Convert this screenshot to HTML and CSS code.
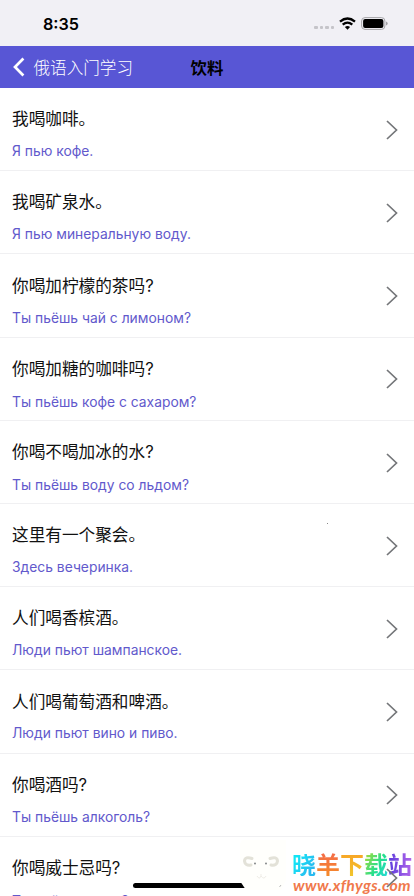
FILE: index.html
```html
<!DOCTYPE html>
<html lang="zh-CN">
<head>
<meta charset="utf-8">
<title>饮料</title>
<link rel="stylesheet" href="styles.css">
</head>
<body>
<div class="phone">
  <header class="status">
    <span class="time">8:35</span>
    <div class="indicators">
      <span class="cell"><i></i><i></i><i></i><i></i></span>
      <svg class="wifi" width="17" height="13" viewBox="0 0 17 13"><g fill="none" stroke="#000" stroke-width="2.3"><path d="M1 4.6Q8.5-1.7 16 4.6"/><path d="M3.7 7.7Q8.5 3.6 13.3 7.7"/></g><path d="M5.9 10.1Q8.5 7.9 11.1 10.1L8.5 12.7Z"/></svg>
      <svg class="battery" width="27" height="13" viewBox="0 0 27 13"><rect x=".6" y=".6" width="23.3" height="11.8" rx="3.4" fill="#f1f0f5" stroke="#a5a4a8"/><rect x="2.1" y="2.1" width="20.3" height="8.8" rx="2"/><path d="M25.1 4.6Q26.6 5 26.6 6.5T25.1 8.4Z" fill="#98979b"/></svg>
    </div>
  </header>
  <nav class="nav">
    <svg class="back" width="12" height="20" viewBox="0 0 12 20"><path d="M10.4 1.5L2 10l8.4 8.5" fill="none" stroke="#fff" stroke-width="2.7"/></svg>
    <span class="parent">俄语入门学习</span>
    <h1>饮料</h1>
  </nav>
  <ul class="list">
    <li><div><p class="zh">我喝咖啡。</p><p class="ru">Я пью кофе.</p></div><svg class="chev" viewBox="0 0 12 20"><path d="M1 1l9.5 9L1 19"/></svg></li>
    <li><div><p class="zh">我喝矿泉水。</p><p class="ru">Я пью минеральную воду.</p></div><svg class="chev" viewBox="0 0 12 20"><path d="M1 1l9.5 9L1 19"/></svg></li>
    <li><div><p class="zh">你喝加柠檬的茶吗<span>?</span></p><p class="ru">Ты пьёшь чай с лимоном?</p></div><svg class="chev" viewBox="0 0 12 20"><path d="M1 1l9.5 9L1 19"/></svg></li>
    <li><div><p class="zh">你喝加糖的咖啡吗<span>?</span></p><p class="ru">Ты пьёшь кофе с сахаром?</p></div><svg class="chev" viewBox="0 0 12 20"><path d="M1 1l9.5 9L1 19"/></svg></li>
    <li><div><p class="zh">你喝不喝加冰的水<span>?</span></p><p class="ru">Ты пьёшь воду со льдом?</p></div><svg class="chev" viewBox="0 0 12 20"><path d="M1 1l9.5 9L1 19"/></svg></li>
    <li><div><p class="zh">这里有一个聚会。</p><p class="ru">Здесь вечеринка.</p></div><svg class="chev" viewBox="0 0 12 20"><path d="M1 1l9.5 9L1 19"/></svg></li>
    <li><div><p class="zh">人们喝香槟酒。</p><p class="ru">Люди пьют шампанское.</p></div><svg class="chev" viewBox="0 0 12 20"><path d="M1 1l9.5 9L1 19"/></svg></li>
    <li><div><p class="zh">人们喝葡萄酒和啤酒。</p><p class="ru">Люди пьют вино и пиво.</p></div><svg class="chev" viewBox="0 0 12 20"><path d="M1 1l9.5 9L1 19"/></svg></li>
    <li><div><p class="zh">你喝酒吗<span>?</span></p><p class="ru">Ты пьёшь алкоголь?</p></div><svg class="chev" viewBox="0 0 12 20"><path d="M1 1l9.5 9L1 19"/></svg></li>
    <li><div><p class="zh">你喝威士忌吗<span>?</span></p><p class="ru">Ты пьёшь виски?</p></div><svg class="chev" viewBox="0 0 12 20"><path d="M1 1l9.5 9L1 19"/></svg></li>
  </ul>
  <i class="speck"></i>
  <div class="home"></div>
  <div class="mark">
    <svg class="sheep" width="48" height="54" viewBox="0 0 48 54"><path d="M2 0H46V40L41 50H6L0 41V4Z" fill="#fffffc"/><g fill="none" stroke="#e3e2d8" stroke-width="3" stroke-linecap="round"><path d="M12 18.500Q5 16 4.500 21Q5 26 11 25"/><path d="M30 18.500Q37 16 37.500 21Q37 26 31 25"/></g><g fill="#777b7d"><circle cx="15" cy="23.500" r=".9"/><circle cx="26" cy="23.500" r=".9"/></g><path d="M17 36q2.500 4 4 0q3 4 5 0M21 36v-2" fill="none" stroke="#efede7"/><path d="M39.500 47l1.500-2" stroke="#bbb"/></svg>
    <div class="brand">
      <div class="name"><span class="c1">晓</span><span class="c2">羊</span><span class="c3">下</span><span class="c4">载</span><span class="c5">站</span></div>
      <div class="url">www.xfhygs.com</div>
    </div>
  </div>
</div>
</body>
</html>
```
FILE: styles.css
```css
* { box-sizing: border-box; }
body, p, h1, ul { margin: 0; padding: 0; }
body { background: #fff; }
.phone {
  position: relative;
  width: 414px;
  height: 896px;
  overflow: hidden;
  background: #fff;
  font-family: Inter, "Noto Sans CJK SC", sans-serif;
}
.status {
  display: flex;
  justify-content: space-between;
  height: 45.5px;
  padding: 13px 26px 0 43px;
  background: #f1f0f5;
}
.time { font-size: 16.2px; line-height: 22px; font-weight: 600; }
.indicators { display: flex; align-items: flex-start; padding-top: 4px; }
.cell { display: flex; gap: 2px; margin: 9px 5px 0 0; }
.cell i { width: 3.4px; height: 3.4px; border-radius: 1px; background: #c5c4c9; }
.wifi { margin-right: 5px; }
.nav {
  position: relative;
  display: flex;
  align-items: center;
  height: 42.5px;
  padding-left: 12.5px;
  background: #5856d5;
}
.parent {
  margin-left: 9px;
  color: #fff;
  font: 300 16.6px/24px "Noto Sans CJK SC", sans-serif;
}
.nav h1 {
  position: absolute;
  left: 0;
  right: 0;
  text-align: center;
  font: 700 16.4px/24px "Noto Sans CJK SC", sans-serif;
}
.list { list-style: none; }
.list li {
  display: flex;
  justify-content: space-between;
  height: 83.2px;
  padding: 18.2px 16px 0 12px;
  border-bottom: 1px solid #f0f0f2;
}
.zh { color: #111; font: 400 16.65px/24px "Noto Sans CJK SC", sans-serif; }
.zh span { font-family: Inter, sans-serif; }
.ru { margin-top: 10.8px; color: #6259cc; font-size: 13.85px; line-height: 20px; }
.chev { position: relative; z-index: 2; width: 12px; height: 20px; margin-top: 13.6px; fill: none; stroke: #747679; stroke-width: 1.7; }
.speck { position: absolute; left: 327px; top: 523px; width: 1px; height: 1px; background: #888; }
.home { position: absolute; left: 133px; top: 883px; width: 148px; height: 5px; border-radius: 3px; background: #000; }
.mark { position: absolute; left: 240px; top: 840px; display: flex; }
.brand { margin-left: 4px; width: 122px; }
.name { display: flex; margin-top: 11px; font: 700 24px/25px "Noto Sans CJK SC", sans-serif; }
.name span { width: 24px; color: transparent; background-clip: text; }
.c1 { background-image: linear-gradient(120deg, #12e6f5 20%, #2abaf0 80%); }
.c2 { background-image: linear-gradient(#f4694b, #f58a29); }
.c3 { background-image: linear-gradient(#f9a126, #f1c52b); }
.c4 { background-image: linear-gradient(120deg, #b9db2b, #20df91 60%, #2bd9dc); }
.c5 { background-image: linear-gradient(90deg, #5a3bdc, #b266ea); }
.url {
  margin-left: 1px;
  color: #f0794c;
  font: italic 700 15.8px/17px Lato, sans-serif;
  letter-spacing: .35px;
  white-space: nowrap;
}
```
